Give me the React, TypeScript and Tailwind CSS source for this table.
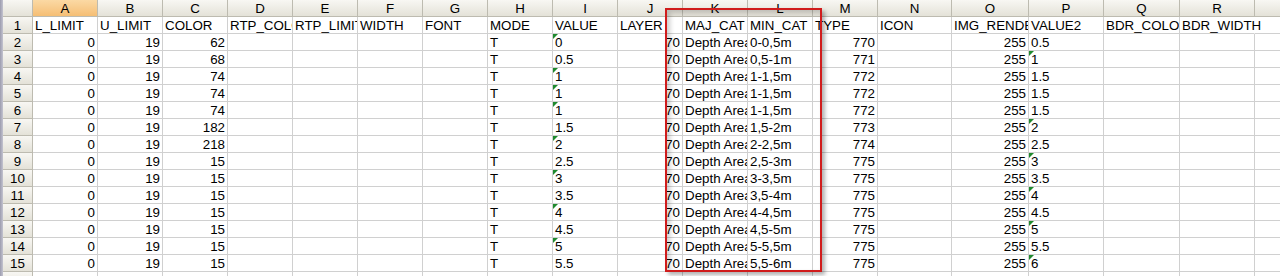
import React from 'react';

type Cell = { t: string; r?: boolean; g?: boolean; spill?: boolean };

const LETTERS = ['A', 'B', 'C', 'D', 'E', 'F', 'G', 'H', 'I', 'J', 'K', 'L', 'M', 'N', 'O', 'P', 'Q', 'R', 'S', 'T'];

// column widths incl. gridline; N..R were widened in the sheet
const WIDTH_CLASS = [
  'w-[65px]', 'w-[65px]', 'w-[65px]', 'w-[65px]', 'w-[65px]', 'w-[65px]', 'w-[65px]', 'w-[65px]', 'w-[65px]', 'w-[65px]',
  'w-[65px]', 'w-[65px]', 'w-[65px]', 'w-[74px]', 'w-[77px]', 'w-[75px]', 'w-[76px]', 'w-[75px]', 'w-[65px]', 'w-[65px]',
];

const HEAD = [
  'L_LIMIT', 'U_LIMIT', 'COLOR', 'RTP_COLOR', 'RTP_LIMIT', 'WIDTH', 'FONT', 'MODE', 'VALUE', 'LAYER',
  'MAJ_CAT', 'MIN_CAT', 'TYPE', 'ICON', 'IMG_RENDER', 'VALUE2', 'BDR_COLOR', 'BDR_WIDTH', '', '',
];

// color, value, min_cat, type, value2
const DATA: [string, string, string, string, string][] = [
  ['62', '0', '0-0,5m', '770', '0.5'],
  ['68', '0.5', '0,5-1m', '771', '1'],
  ['74', '1', '1-1,5m', '772', '1.5'],
  ['74', '1', '1-1,5m', '772', '1.5'],
  ['74', '1', '1-1,5m', '772', '1.5'],
  ['182', '1.5', '1,5-2m', '773', '2'],
  ['218', '2', '2-2,5m', '774', '2.5'],
  ['15', '2.5', '2,5-3m', '775', '3'],
  ['15', '3', '3-3,5m', '775', '3.5'],
  ['15', '3.5', '3,5-4m', '775', '4'],
  ['15', '4', '4-4,5m', '775', '4.5'],
  ['15', '4.5', '4,5-5m', '775', '5'],
  ['15', '5', '5-5,5m', '775', '5.5'],
  ['15', '5.5', '5,5-6m', '775', '6'],
];

// whole numbers stored as text get the green error marker
const isInt = (s: string) => !s.includes('.');

const buildRow = (d: [string, string, string, string, string]): Cell[] => {
  const [color, value, minCat, type, value2] = d;
  const cells: Cell[] = Array.from({ length: 20 }, () => ({ t: '' }));
  cells[0] = { t: '0', r: true };
  cells[1] = { t: '19', r: true };
  cells[2] = { t: color, r: true };
  cells[7] = { t: 'T' };
  cells[8] = { t: value, g: isInt(value) };
  cells[9] = { t: '70', r: true };
  cells[10] = { t: 'Depth Area' };
  cells[11] = { t: minCat };
  cells[12] = { t: type, r: true };
  cells[14] = { t: '255', r: true };
  cells[15] = { t: value2, g: isInt(value2) };
  return cells;
};

const header: Cell[] = HEAD.map((t, i) => ({ t, spill: i === 17 }));
const ROWS: Cell[][] = [header, ...DATA.map(buildRow), Array.from({ length: 20 }, () => ({ t: '' }))];

const headBg = 'bg-gradient-to-b from-[#f8f7f3] to-[#e4e2d8]';

const Triangle = () => (
  <svg className="absolute left-0 top-0" width="5" height="5" viewBox="0 0 5 5">
    <polygon points="0,0 5,0 0,5" fill="#1f8a2e" />
  </svg>
);

export default function App() {
  return (
    <div
      className="relative w-[1280px] h-[276px] overflow-hidden bg-white text-[13.33px] leading-none text-black"
      style={{ fontFamily: '"Liberation Sans", Arial, sans-serif' }}
    >
      <div className="flex">
        {/* left frame strip */}
        <div className="w-[3px] shrink-0 bg-gradient-to-r from-[#9c9cae] to-[#c4c4d0]" />
        <div className="flex flex-col">
          {/* column letters */}
          <div className="flex h-[17px]">
            <div className={`w-[30px] shrink-0 border-r border-b border-[#bdbbb0] ${headBg}`} />
            {LETTERS.map((l, j) => (
              <div
                key={l}
                className={`${WIDTH_CLASS[j]} shrink-0 flex items-center justify-center border-r border-b border-[#bdbbb0] pt-[1px] ${
                  l === 'A' ? 'bg-gradient-to-b from-[#fbd9a4] to-[#f5be74]' : headBg
                }`}
              >
                {l}
              </div>
            ))}
          </div>
          {ROWS.map((row, i) => (
            <div key={i} className="flex h-[17px]">
              <div
                className={`w-[30px] shrink-0 flex items-center justify-center border-r border-b border-[#bdbbb0] pt-[1px] ${headBg}`}
              >
                {i + 1}
              </div>
              {row.map((c, j) => (
                <div
                  key={j}
                  className={`relative ${WIDTH_CLASS[j]} shrink-0 flex items-center whitespace-nowrap border-r border-b border-[#d0d0d0] px-[2px] ${
                    c.r ? 'justify-end' : 'justify-start'
                  } ${c.spill ? 'overflow-visible z-10 border-r-transparent' : 'overflow-hidden'}`}
                >
                  {c.g && <Triangle />}
                  <span className={`pt-[1px] ${c.spill ? 'bg-white' : ''}`}>{c.t}</span>
                </div>
              ))}
            </div>
          ))}
        </div>
      </div>

      {/* red highlight frame */}
      <div className="absolute left-[665px] top-[8px] w-[157px] h-[264px] border-2 border-[#d01c1c] shadow-[3px_3px_4px_rgba(0,0,0,0.3),inset_3px_3px_5px_rgba(0,0,0,0.2)]" />
    </div>
  );
}
